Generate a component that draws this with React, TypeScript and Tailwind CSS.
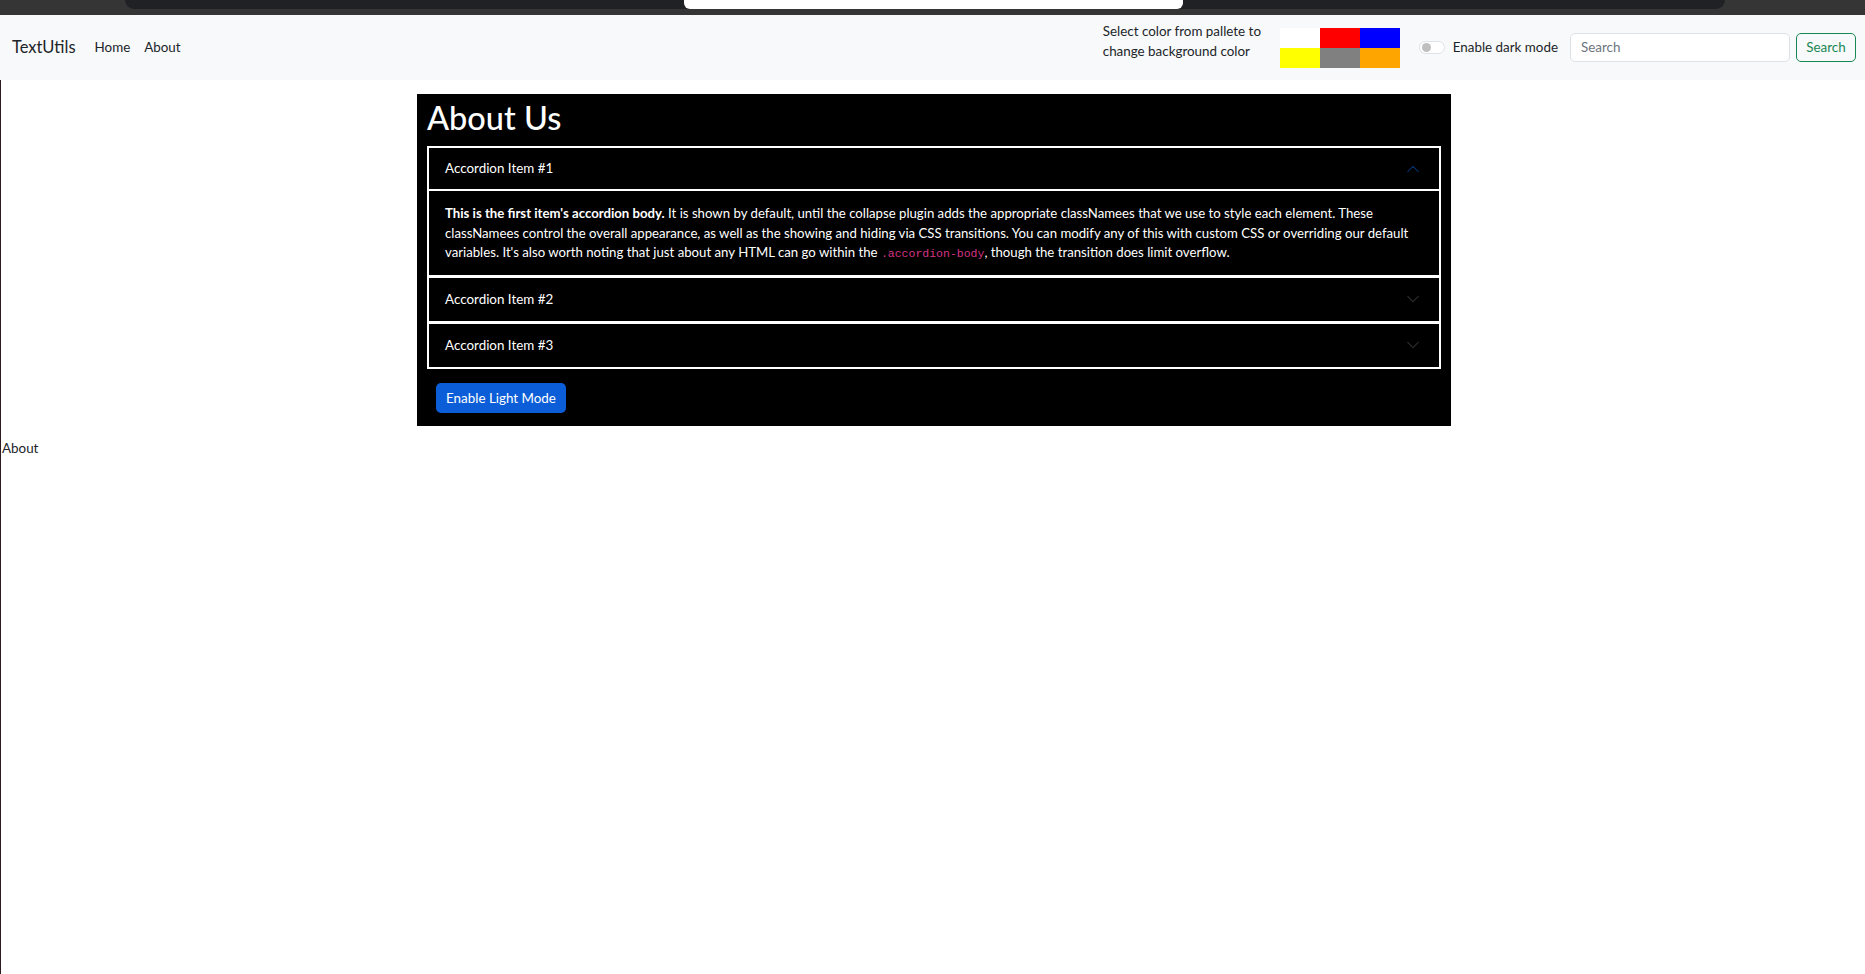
import { useState } from "react";

const FONT = { fontFamily: "Lato, 'Noto Sans', sans-serif" };

const PALETTE = ["bg-[#ffffff]", "bg-[#ff0000]", "bg-[#0000ff]", "bg-[#ffff00]", "bg-[#808080]", "bg-[#ffa500]"];

function Chevron({ up, color }: { up?: boolean; color: string }) {
  return (
    <svg width="14" height="14" viewBox="0 0 16 16" fill="none" stroke={color} strokeWidth="1.4" strokeLinecap="round" strokeLinejoin="round">
      {up ? <path d="M2 11L8 5L14 11" /> : <path d="M2 5L8 11L14 5" />}
    </svg>
  );
}

export default function App() {
  const [open, setOpen] = useState(1);

  const items = [
    { id: 1, title: "Accordion Item #1" },
    { id: 2, title: "Accordion Item #2" },
    { id: 3, title: "Accordion Item #3" },
  ];

  return (
    <div className="min-h-[974px] bg-white text-[#212529]" style={FONT}>
      {/* browser chrome remnant */}
      <div className="h-[15px] bg-[#353535] relative">
        <div className="absolute left-[125px] w-[1600px] top-0 h-[9px] bg-[#202124] rounded-b-[10px]" />
        <div className="absolute left-[684px] w-[499px] top-0 h-[9px] bg-white rounded-b-[6px]" />
      </div>

      {/* Navbar */}
      <nav className="h-[65px] bg-[#f8f9fa] flex items-center pl-[12px] pr-[9px]">
        <span className="text-[16.5px] text-[#212529] mr-[19px]">TextUtils</span>
        <a className="text-[13.4px] text-[#212529] mr-[14px]">Home</a>
        <a className="text-[13.4px] text-[#212529]">About</a>

        <div className="ml-auto flex items-center">
          <p className="w-[170px] text-[13.4px] leading-[20px] text-[#212529] mr-[7px] mb-[14px]">
            Select color from pallete to change background color
          </p>
          <div className="grid grid-cols-3 w-[120px] h-[40px] mr-[19px]">
            {PALETTE.map((c) => (
              <div key={c} className={`${c} w-[40px] h-[20px]`} />
            ))}
          </div>
          <div className="w-[26px] h-[13px] rounded-full border border-[#dee2e6] bg-white flex items-center px-[2px] mr-[8px]">
            <div className="w-[9px] h-[9px] rounded-full bg-[#bfbfbf]" />
          </div>
          <span className="text-[13.4px] text-[#212529] mr-[12px]">Enable dark mode</span>
          <div className="w-[220px] h-[29px] rounded-[5px] border border-[#dee2e6] bg-white flex items-center px-[10px] mr-[6px]">
            <span className="text-[13.4px] text-[#6c757d]">Search</span>
          </div>
          <button className="w-[60px] h-[29px] rounded-[5px] border border-[#198754] text-[#198754] text-[13.4px]">
            Search
          </button>
        </div>
      </nav>

      {/* Main */}
      <div className="border-l border-[#2c1a24] min-h-[894px] pt-[14px]">
        <div className="w-[1034px] ml-[416px] bg-black px-[10px] pt-[4px] pb-[13px]">
          <h1 className="text-[32.5px] leading-[40px] font-medium text-white mb-[8px]">About Us</h1>

          <div className="border-2 border-white flex flex-col gap-[3px] bg-white">
            {items.map((it) => (
              <div key={it.id} className="bg-black">
                <button
                  onClick={() => setOpen(open === it.id ? 0 : it.id)}
                  className={`w-full h-[43px] flex items-center justify-between pl-[16px] pr-[19px] text-[13.4px] text-white bg-black ${
                    open === it.id ? "border-b-2 border-white" : ""
                  }`}
                >
                  <span>{it.title}</span>
                  <Chevron up={open === it.id} color={open === it.id ? "#052c65" : "#2b2b2b"} />
                </button>
                {open === it.id && (
                  <div className="px-[16px] pt-[13px] pb-[12px] text-[13.2px] leading-[19.6px] text-white">
                    <strong className="font-bold">This is the first item's accordion body.</strong> It is shown by default, until the collapse plugin adds the appropriate classNamees that we use to style each element. These classNamees control the overall appearance, as well as the showing and hiding via CSS transitions. You can modify any of this with custom CSS or overriding our default variables. It's also worth noting that just about any HTML can go within the{" "}
                    <code className="text-[11.5px] leading-[14px] text-[#d63384]" style={{ fontFamily: "'Liberation Mono', monospace" }}>
                      .accordion-body
                    </code>
                    , though the transition does limit overflow.
                  </div>
                )}
              </div>
            ))}
          </div>

          <button className="mt-[14px] ml-[9px] w-[130px] h-[30px] rounded-[5px] bg-[#0b5ed7] text-white text-[13.4px]">
            Enable Light Mode
          </button>
        </div>

        <p className="mt-[13px] pl-[1px] text-[13.4px] leading-[19px] text-[#212529]">About</p>
      </div>
    </div>
  );
}
